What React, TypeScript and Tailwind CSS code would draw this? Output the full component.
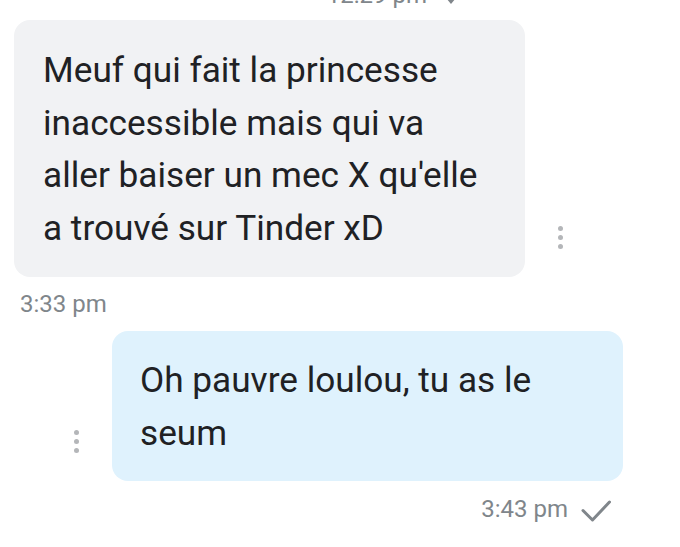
import React from "react";

const Dots = () => (
  <div className="flex flex-col gap-[4px]">
    <span className="block w-[5px] h-[5px] rounded-full bg-[#b4b6b9]" />
    <span className="block w-[5px] h-[5px] rounded-full bg-[#b4b6b9]" />
    <span className="block w-[5px] h-[5px] rounded-full bg-[#b4b6b9]" />
  </div>
);

const Check = () => (
  <svg width="30" height="22" viewBox="0 0 30 22" fill="none">
    <polyline
      points="2,10.5 11.5,20 28.5,2"
      stroke="#80868b"
      strokeWidth="3"
      strokeLinecap="round"
      strokeLinejoin="round"
    />
  </svg>
);

const DoubleCheck = () => (
  <svg width="18" height="22" viewBox="0 0 18 22" fill="none">
    <polyline points="1,12 6,18 17,5" stroke="#80868b" strokeWidth="2.5" strokeLinecap="round" />
    <polyline points="1,6 6,12 17,0" stroke="#80868b" strokeWidth="2.5" strokeLinecap="round" />
  </svg>
);

export default function App() {
  const received = [
    "Meuf qui fait la princesse",
    "inaccessible mais qui va",
    "aller baiser un mec X qu'elle",
    "a trouvé sur Tinder xD",
  ];
  const sent = ["Oh pauvre loulou, tu as le", "seum"];

  return (
    <div className="w-[680px] h-[547px] overflow-hidden bg-white font-['Roboto','Liberation_Sans',sans-serif] text-[#202124]">
      {/* previous timestamp, mostly off screen */}
      <div className="flex justify-end items-center gap-[18px] pr-[217px] h-[24px] mt-[-17px] text-[24px] leading-[24px] text-[#80868b]">
        <span>12:29 pm</span>
        <DoubleCheck />
      </div>

      <div className="flex items-end mt-[13px] pl-[14px]">
        <div className="w-[511px] rounded-[16px] bg-[#f1f2f4] pt-[24px] pb-[23px] pl-[29px] text-[35.2px] leading-[52.5px] whitespace-nowrap">
          {received.map((line, i) => (
            <div key={i}>{line}</div>
          ))}
        </div>
        <div className="ml-[33px] mb-[28px]">
          <Dots />
        </div>
      </div>

      <div className="mt-[15px] pl-[20px] h-[24px] text-[24px] leading-[24px] text-[#80868b]">
        3:33 pm
      </div>

      <div className="flex items-end mt-[15px] pl-[74px]">
        <div className="mb-[28px]">
          <Dots />
        </div>
        <div className="ml-[33px] w-[511px] rounded-[16px] bg-[#dff2fd] pt-[23px] pb-[22px] pl-[28px] text-[35.2px] leading-[52.5px] whitespace-nowrap">
          {sent.map((line, i) => (
            <div key={i}>{line}</div>
          ))}
        </div>
      </div>

      <div className="flex justify-end items-center gap-[13px] mt-[16px] pr-[69px] h-[24px] text-[24px] leading-[24px] text-[#80868b]">
        <span>3:43 pm</span>
        <span className="mt-[3px]">
          <Check />
        </span>
      </div>
    </div>
  );
}
